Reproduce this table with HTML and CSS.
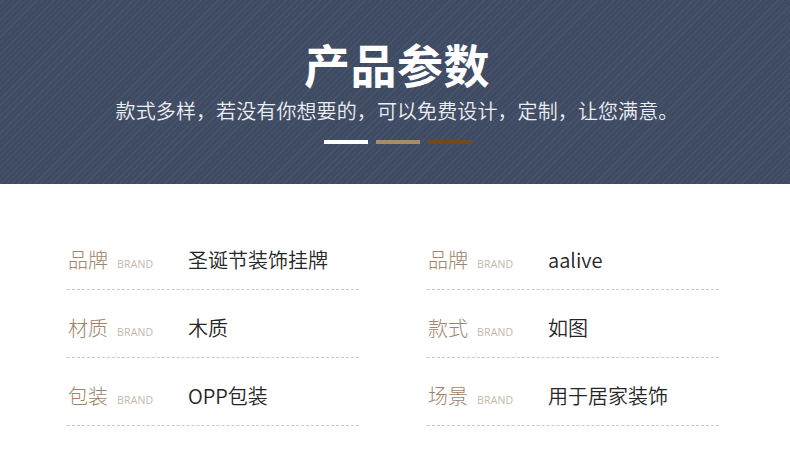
FILE: index.html
```html
<!DOCTYPE html>
<html lang="zh-CN">
<head>
<meta charset="utf-8">
<title>产品参数</title>
<link rel="stylesheet" href="styles.css">
</head>
<body>
<header class="hero">
  <h1 class="hero-title">产品参数</h1>
  <p class="hero-sub">款式多样，若没有你想要的，可以免费设计，定制，让您满意。</p>
  <div class="bars">
    <span class="bar bar-white"></span>
    <span class="bar bar-tan"></span>
    <span class="bar bar-brown"></span>
  </div>
</header>
<main class="params">
  <div class="row">
    <div class="label"><span class="cn">品牌</span><span class="en">BRAND</span></div>
    <div class="value">圣诞节装饰挂牌</div>
  </div>
  <div class="row">
    <div class="label"><span class="cn">品牌</span><span class="en">BRAND</span></div>
    <div class="value">aalive</div>
  </div>
  <div class="row">
    <div class="label"><span class="cn">材质</span><span class="en">BRAND</span></div>
    <div class="value">木质</div>
  </div>
  <div class="row">
    <div class="label"><span class="cn">款式</span><span class="en">BRAND</span></div>
    <div class="value">如图</div>
  </div>
  <div class="row">
    <div class="label"><span class="cn">包装</span><span class="en">BRAND</span></div>
    <div class="value">OPP包装</div>
  </div>
  <div class="row">
    <div class="label"><span class="cn">场景</span><span class="en">BRAND</span></div>
    <div class="value">用于居家装饰</div>
  </div>
</main>
</body>
</html>
```

FILE: styles.css
```css
* { box-sizing: border-box; }
html, body { margin: 0; padding: 0; background: #ffffff; }
body {
  font-family: "Noto Sans CJK SC", "Noto Sans", sans-serif;
  width: 790px;
}
.hero {
  height: 184px;
  background-color: #3e4b63;
  background-image: repeating-linear-gradient(135deg, rgba(255,255,255,0) 0px, rgba(255,255,255,0) 2px, rgba(255,255,255,0.05) 2px, rgba(255,255,255,0.05) 3px, rgba(255,255,255,0) 3px, rgba(255,255,255,0) 4px);
  display: flex;
  flex-direction: column;
  align-items: center;
  padding-top: 39px;
}
.hero-title {
  margin: 0 0 0 4px;
  font-size: 46px;
  line-height: 48px;
  font-weight: 700;
  color: #ffffff;
  letter-spacing: 0.5px;
}
.hero-sub {
  margin: 13px 0 0 4px;
  font-size: 20px;
  line-height: 22px;
  font-weight: 350;
  color: #eceef2;
  letter-spacing: 0.1px;
}
.bars {
  display: flex;
  gap: 8px;
  margin: 18px 0 0 6px;
}
.bar { display: block; width: 44px; height: 4px; }
.bar-white { background: #ffffff; }
.bar-tan { background: #a98a69; }
.bar-brown { background: #6e4a1c; }

.params {
  display: grid;
  grid-template-columns: 292px 292px;
  column-gap: 68px;
  row-gap: 28px;
  padding: 66px 0 0 67px;
}
.row {
  display: flex;
  align-items: center;
  height: 40px;
  padding-bottom: 19px;
  border-bottom: 1px dashed #c9c9c9;
}
.label {
  display: flex;
  align-items: baseline;
  width: 121px;
  padding-left: 1px;
}
.cn {
  font-size: 20px;
  line-height: 20px;
  font-weight: 300;
  color: #a0836a;
}
.en {
  font-family: "Open Sans", "Liberation Sans", sans-serif;
  font-size: 10.5px;
  color: #c4b7aa;
  margin-left: 9px;
  letter-spacing: 0.2px;
}
.value {
  font-size: 20px;
  line-height: 20px;
  font-weight: 350;
  color: #262626;
}
```
